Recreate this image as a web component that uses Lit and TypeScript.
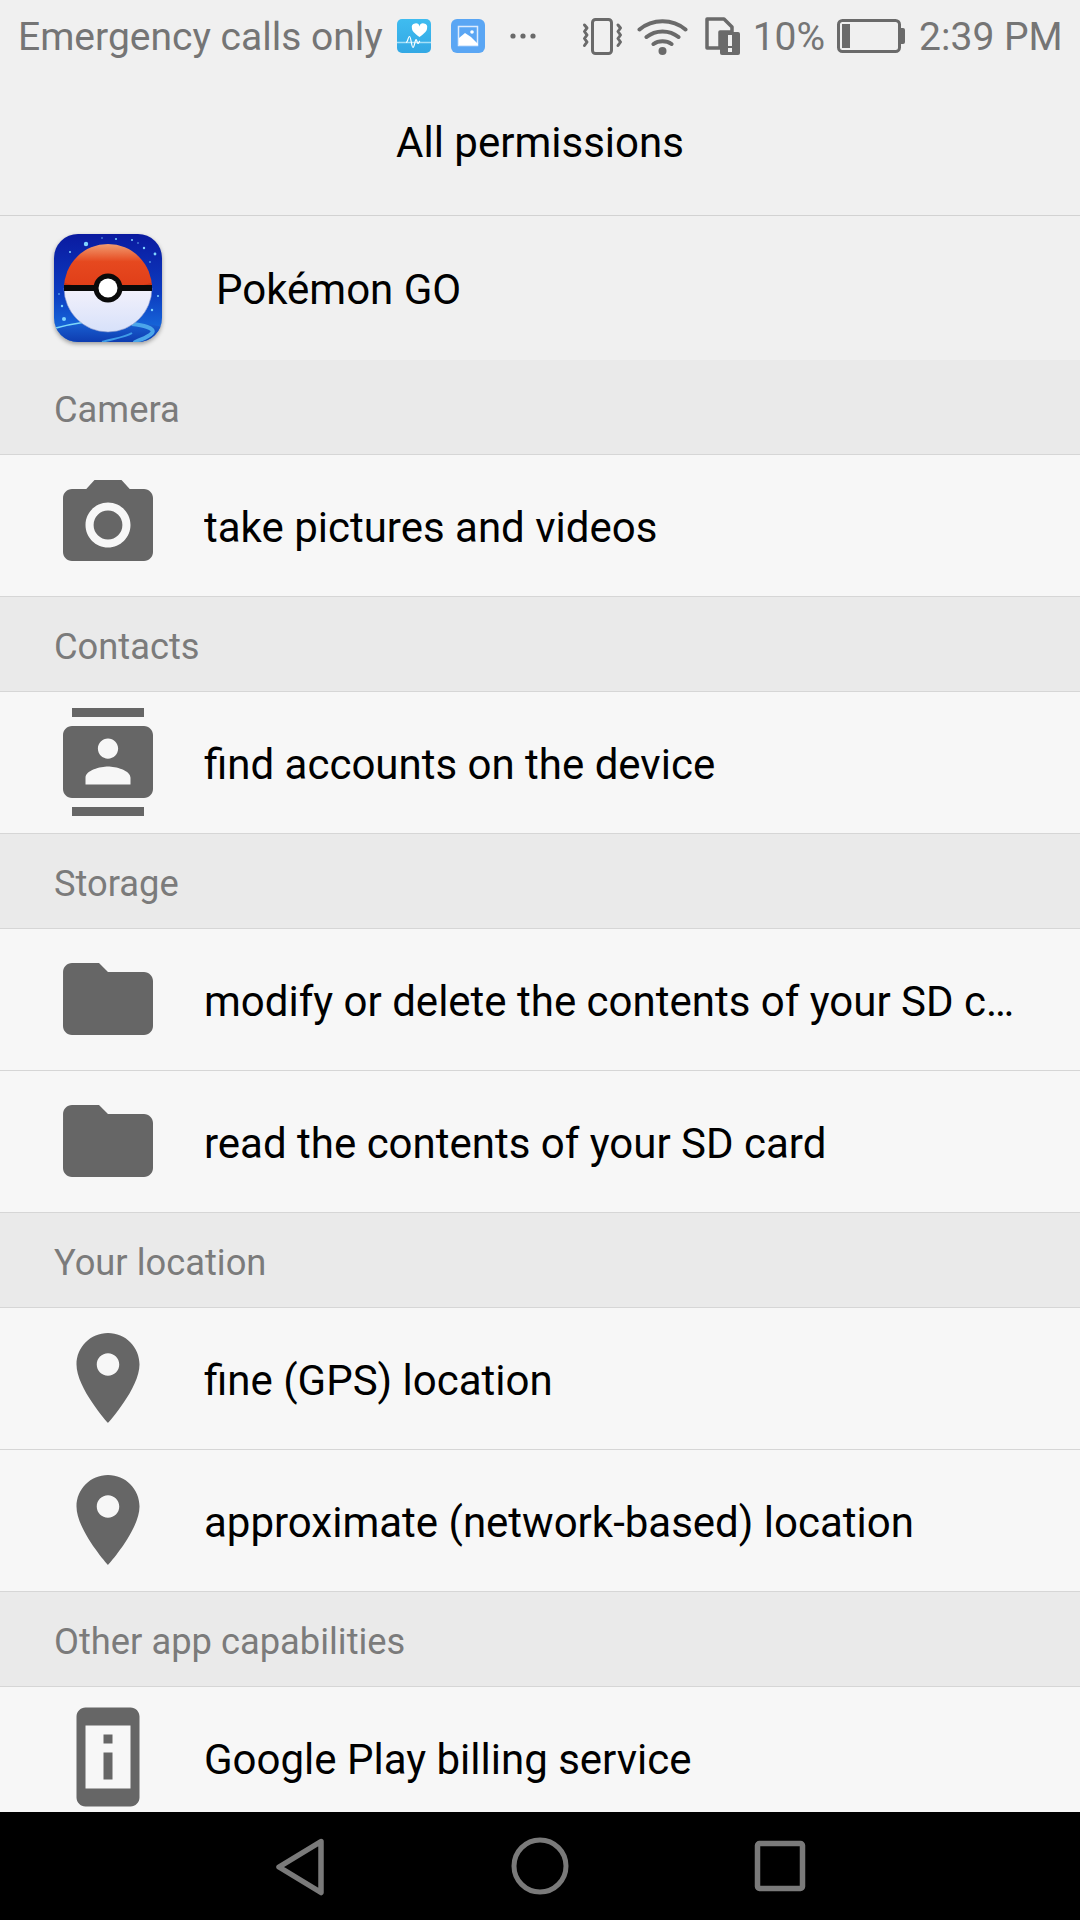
import { LitElement, html, css, svg } from "lit";
import { customElement } from "lit/decorators.js";

const ICONS: Record<string, string> = {
  camera:
    "M12 8.8a3.2 3.2 0 1 0 0 6.4 3.2 3.2 0 0 0 0-6.4zM9 2L7.17 4H4c-1.1 0-2 .9-2 2v12c0 1.1.9 2 2 2h16c1.1 0 2-.9 2-2V6c0-1.1-.9-2-2-2h-3.17L15 2H9zm3 15c-2.76 0-5-2.24-5-5s2.24-5 5-5 5 2.24 5 5-2.24 5-5 5z",
  contacts:
    "M20 0H4v2h16V0zM4 24h16v-2H4v2zM20 4H4c-1.1 0-2 .9-2 2v12c0 1.1.9 2 2 2h16c1.1 0 2-.9 2-2V6c0-1.1-.9-2-2-2zm-8 2.75c1.24 0 2.25 1.01 2.25 2.25s-1.01 2.25-2.25 2.25S9.75 10.24 9.75 9 10.76 6.75 12 6.75zM17 17H7v-1.5c0-1.67 3.33-2.5 5-2.5s5 .83 5 2.5V17z",
  folder:
    "M10 4H4c-1.1 0-1.99.9-1.99 2L2 18c0 1.1.9 2 2 2h16c1.1 0 2-.9 2-2V8c0-1.1-.9-2-2-2h-8l-2-2z",
  place:
    "M12 2C8.13 2 5 5.13 5 9c0 5.25 7 13 7 13s7-7.75 7-13c0-3.87-3.13-7-7-7zm0 9.5c-1.38 0-2.5-1.12-2.5-2.5s1.12-2.5 2.5-2.5 2.5 1.12 2.5 2.5-1.12 2.5-2.5 2.5z",
  device:
    "M13 7h-2v2h2V7zm0 4h-2v6h2v-6zm4-9.99L7 1c-1.1 0-2 .9-2 2v18c0 1.1.9 2 2 2h10c1.1 0 2-.9 2-2V3c0-1.1-.9-1.99-2-1.99zM17 19H7V5h10v14z",
};

type Entry =
  | { section: string }
  | { icon: string; text: string };

const ENTRIES: Entry[] = [
  { section: "Camera" },
  { icon: "camera", text: "take pictures and videos" },
  { section: "Contacts" },
  { icon: "contacts", text: "find accounts on the device" },
  { section: "Storage" },
  { icon: "folder", text: "modify or delete the contents of your SD card" },
  { icon: "folder", text: "read the contents of your SD card" },
  { section: "Your location" },
  { icon: "place", text: "fine (GPS) location" },
  { icon: "place", text: "approximate (network-based) location" },
  { section: "Other app capabilities" },
  { icon: "device", text: "Google Play billing service" },
];

const STARS: [number, number, number][] = [
  [32, 10, 2.2], [78, 6, 1], [90, 14, 1.2], [101, 20, 1.4], [62, 5, 1], [16, 18, 1], [8, 72, 1.2],
  [10, 85, 2], [104, 62, 1], [98, 76, 1.2], [5, 60, 0.8], [96, 28, 0.8], [84, 9, 0.7], [48, 4, 0.7],
];

@customElement("app-root")
export class AppRoot extends LitElement {
  static styles = css`
    :host {
      display: block;
      width: 1080px;
      height: 1920px;
      font-family: Roboto, "Noto Sans", sans-serif;
      background: #f0f0f0;
    }
    .page {
      display: flex;
      flex-direction: column;
      height: 1920px;
      overflow: hidden;
    }
    .status {
      display: flex;
      align-items: center;
      height: 72px;
      padding: 0 18px;
      color: #757575;
      font-size: 39px;
      flex: none;
    }
    .status svg { display: block; flex: none; }
    .status-text { white-space: nowrap; line-height: 72px; padding-top: 2px; }
    .carrier { margin-right: 14px; }
    .n2 { margin-left: 20px; }
    .dots { margin-left: 24px; }
    .vib { margin-left: 45px; }
    .wifi { margin-left: 14px; }
    .sim { margin-left: 17px; }
    .pct { margin-left: 13px; }
    .bat { margin-left: 12px; }
    .time { margin-left: 14px; }
    .title {
      flex: none;
      height: 144px;
      box-sizing: border-box;
      border-bottom: 1px solid #d2d2d2;
      display: flex;
      justify-content: center;
      padding-top: 47px;
      line-height: 48px;
      font-size: 42px;
      color: #000;
    }
    .app {
      flex: none;
      height: 144px;
      display: flex;
      align-items: center;
      padding-left: 54px;
      font-size: 42px;
      color: #000;
    }
    .app-name { padding-top: 2px; }
    .app-icon { display: block; margin: 0 54px 1px 0; filter: drop-shadow(0 2px 2px rgba(0,0,0,.35)); }
    .list {
      flex: 1;
      min-height: 0;
      overflow: hidden;
      background: #f7f7f7;
    }
    .section {
      box-sizing: border-box;
      height: 95px;
      background: #eaeaea;
      border-bottom: 1px solid #d6d6d6;
      padding: 4px 0 0 54px;
      display: flex;
      align-items: center;
      font-size: 36.3px;
      color: #7b7b7b;
    }
    .row {
      box-sizing: border-box;
      height: 142px;
      border-bottom: 1px solid #d6d6d6;
      display: flex;
      align-items: center;
      padding: 0 54px;
      font-size: 42px;
      color: #000;
    }
    .row svg { flex: none; display: block; margin: 0 42px 1px 0; }
    .row-text {
      flex: 1;
      min-width: 0;
      padding-top: 4px;
      white-space: nowrap;
      overflow: hidden;
      text-overflow: ellipsis;
    }
    .nav {
      flex: none;
      height: 108px;
      background: #000;
    }
    .nav svg { display: block; }
  `;

  private statusIcons() {
    return {
      health: html`<svg class="n1" width="34" height="34" viewBox="0 0 34 34">
        <defs><linearGradient id="hg" x1="0" y1="0" x2="0" y2="1"><stop offset="0" stop-color="#3fbcf0"/><stop offset="1" stop-color="#33a8e4"/></linearGradient></defs>
        <rect width="34" height="34" rx="5" fill="url(#hg)"/>
        <path d="M23 19.500c-5-3.600-7.600-6-7.600-9a3.700 3.700 0 0 1 7.600-1.500 3.700 3.700 0 0 1 7.600 1.500c0 3-2.600 5.400-7.600 9z" transform="translate(-0.500 -1.500)" fill="#fff"/>
        <path d="M0 23.500h34" stroke="#a5e0f8" stroke-width="1.500"/>
        <path d="M9 23.500c2 0 2-6 3.500-6s2 11 3.500 11 2-8 3-8 1 4 2 4 1-2 2-2.500" fill="none" stroke="#fff" stroke-width="1.200"/>
      </svg>`,
      gallery: html`<svg class="n2" width="34" height="34" viewBox="0 0 34 34">
        <rect width="34" height="34" rx="6" fill="#5aa6f4"/>
        <rect x="7.500" y="7.500" width="19" height="19" fill="none" stroke="#dcebfd" stroke-width="1.500"/>
        <path d="M8 19l6-5 6 4 7 7v1H8z" fill="#fff"/>
        <circle cx="21" cy="13" r="1.800" fill="#fff"/>
      </svg>`,
      dots: html`<svg class="dots" width="28" height="8" viewBox="0 0 28 8">
        <circle cx="4" cy="4" r="2.600" fill="#6a6a6a"/><circle cx="14" cy="4" r="2.600" fill="#6a6a6a"/><circle cx="24" cy="4" r="2.600" fill="#6a6a6a"/>
      </svg>`,
      vib: html`<svg class="vib" width="41" height="37" viewBox="0 0 41 37">
        <rect x="10.500" y="1.500" width="19" height="34" rx="3" fill="none" stroke="#6a6a6a" stroke-width="3"/>
        <path d="M2.500 7l2.500 3-2.500 3.500 2.500 3.500-2.500 3.500 2.500 3.500-2.500 3.500M36 7l2.500 3-2.500 3.500 2.500 3.500-2.500 3.500 2.500 3.500-2.500 3.500" fill="none" stroke="#6a6a6a" stroke-width="3" stroke-linecap="round" stroke-linejoin="round"/>
      </svg>`,
      wifi: html`<svg class="wifi" width="51" height="38" viewBox="0 0 51 38">
        <path d="M2.500 12.500c13-11 33-11 46 0M9.500 20c9-7.500 23-7.500 32 0M16.500 27c5-3.800 13-3.800 18 0" fill="none" stroke="#6a6a6a" stroke-width="4" stroke-linecap="round"/>
        <circle cx="25.500" cy="34" r="4" fill="#6a6a6a"/>
      </svg>`,
      sim: html`<svg class="sim" width="35" height="38" viewBox="0 0 35 38">
        <path d="M2 2h17l8 8v5H15v16H2z" fill="none" stroke="#6a6a6a" stroke-width="3.500" stroke-linejoin="round"/>
        <path d="M15 15h18a2 2 0 0 1 2 2v19a2 2 0 0 1-2 2H17a2 2 0 0 1-2-2z" fill="#6a6a6a"/>
        <rect x="23" y="18" width="4" height="11" fill="#f0f0f0"/>
        <rect x="23" y="31" width="4" height="4" fill="#f0f0f0"/>
      </svg>`,
      bat: html`<svg class="bat" width="68" height="34" viewBox="0 0 68 34">
        <rect x="1.500" y="1.500" width="61" height="31" rx="4" fill="none" stroke="#6a6a6a" stroke-width="3"/>
        <rect x="5" y="5" width="8" height="24" fill="#6a6a6a"/>
        <path d="M64 9h2a2 2 0 0 1 2 2v12a2 2 0 0 1-2 2h-2z" fill="#6a6a6a"/>
      </svg>`,
    };
  }

  private pokeball() {
    return html`<svg class="app-icon" width="108" height="108" viewBox="0 0 108 108">
      <defs>
        <linearGradient id="bg" x1="0" y1="0" x2="0" y2="1">
          <stop offset="0" stop-color="#0a1aa0"/><stop offset=".55" stop-color="#0c3cc0"/><stop offset="1" stop-color="#1b78e4"/>
        </linearGradient>
        <linearGradient id="gnd" x1="0" y1="0" x2="0" y2="1">
          <stop offset="0" stop-color="#1a62d4"/><stop offset="1" stop-color="#0e3cb0"/>
        </linearGradient>
        <linearGradient id="red" x1="0" y1="0" x2="0" y2="1">
          <stop offset="0" stop-color="#f19c70"/><stop offset=".4" stop-color="#e6491f"/><stop offset="1" stop-color="#e03d18"/>
        </linearGradient>
        <linearGradient id="wht" x1="0" y1="0" x2="0" y2="1">
          <stop offset="0" stop-color="#f3f1fb"/><stop offset="1" stop-color="#d7e1fa"/>
        </linearGradient>
        <clipPath id="clip"><rect width="108" height="108" rx="24"/></clipPath>
      </defs>
      <g clip-path="url(#clip)">
        <rect width="108" height="108" fill="url(#bg)"/>
        ${STARS.map(([x, y, r]) => svg`<circle cx=${x} cy=${y} r=${r} fill="#7fd4ff"/>`)}
        <path d="M0 95c30-8 80-10 108-2v15H0z" fill="url(#gnd)"/>
        <path d="M2 94c18-5 36-7 50-7" fill="none" stroke="#7fd8f8" stroke-width="1.500"/>
        <path d="M78 90c10 1 24 4 20 9s-14 7-18 10" fill="none" stroke="#4ba6ea" stroke-width="4"/>
        <path d="M48 108c10-3 24-5 30-9" fill="none" stroke="#3f9ce8" stroke-width="2"/>
        <path d="M10 54a44 44 0 0 1 88 0z" fill="url(#red)"/>
        <path d="M10.500 49c12 4 28 5 43.500 5s31-1 43.500-5l.5 5H10z" fill="#c93414"/>
        <path d="M10 54a44 44 0 0 0 88 0z" fill="url(#wht)" stroke="#8b97c8" stroke-width=".6"/>
        <rect x="10" y="51" width="88" height="6" fill="#0a0a0a"/>
        <circle cx="54" cy="54" r="14.500" fill="#0a0a0a"/>
        <circle cx="54" cy="54" r="9.500" fill="#fff"/>
      </g>
    </svg>`;
  }

  render() {
    const s = this.statusIcons();
    return html`<div class="page">
      <div class="status">
        <span class="status-text carrier">Emergency calls only</span>
        ${s.health}${s.gallery}${s.dots}${s.vib}${s.wifi}${s.sim}
        <span class="status-text pct">10%</span>
        ${s.bat}
        <span class="status-text time">2:39 PM</span>
      </div>
      <div class="title">All permissions</div>
      <div class="app">${this.pokeball()}<span class="app-name">Pokémon GO</span></div>
      <div class="list">
        ${ENTRIES.map((e) =>
          "section" in e
            ? html`<div class="section">${e.section}</div>`
            : html`<div class="row">
                <svg width="108" height="108" viewBox="0 0 24 24"><path d=${ICONS[e.icon]} fill="#666" fill-rule="evenodd"/></svg>
                <span class="row-text">${e.text}</span>
              </div>`
        )}
      </div>
      <div class="nav">
        <svg width="1080" height="108" viewBox="0 0 1080 108">
          <path d="M321 29.500L279 55l42 25.500z" fill="none" stroke="#7a7a7a" stroke-width="5.500" stroke-linejoin="round"/>
          <circle cx="540" cy="54" r="26" fill="none" stroke="#7a7a7a" stroke-width="5"/>
          <rect x="757.500" y="31.500" width="45" height="45" rx="2" fill="none" stroke="#7a7a7a" stroke-width="5.500"/>
        </svg>
      </div>
    </div>`;
  }
}
